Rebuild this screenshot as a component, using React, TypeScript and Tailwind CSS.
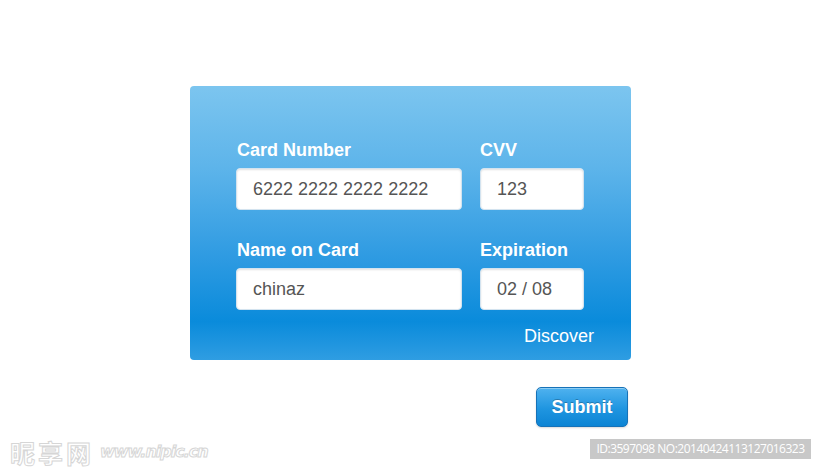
export default function App() {
  const rows = [
    { label: "Card Number", value: "6222 2222 2222 2222", sideLabel: "CVV", sideValue: "123" },
    { label: "Name on Card", value: "chinaz", sideLabel: "Expiration", sideValue: "02 / 08" },
  ];

  return (
    <div className="relative w-[821px] h-[469px] bg-white overflow-hidden font-['Liberation_Sans',Arial,sans-serif]">
      <div className="pt-[86px] pl-[190px] w-[631px] flex flex-col">
        {/* Card form */}
        <div className="w-[441px] h-[274px] rounded-[4px] bg-[linear-gradient(to_bottom,#7cc5ef_0%,#5db4ea_30%,#2f9be2_62%,#0a8bdb_86%,#2f9de2_100%)] pt-[54px] px-[46px] pb-[15px] flex flex-col">
          {rows.map((row, i) => (
            <div key={i} className={`flex gap-[18px] ${i > 0 ? "mt-[30px]" : ""}`}>
              <div className="w-[226px] flex flex-col">
                <label className="text-[18px] leading-[20px] font-bold text-white pl-px">{row.label}</label>
                <div className="mt-[8px] h-[42px] rounded-[4px] bg-white border border-[#d3e3ef] shadow-[inset_0_1px_2px_rgba(0,0,0,0.12)] flex items-center pl-[16px] text-[18px] text-[#555]">
                  {row.value}
                </div>
              </div>
              <div className="w-[104px] flex flex-col">
                <label className="text-[18px] leading-[20px] font-bold text-white">{row.sideLabel}</label>
                <div className="mt-[8px] h-[42px] rounded-[4px] bg-white border border-[#d3e3ef] shadow-[inset_0_1px_2px_rgba(0,0,0,0.12)] flex items-center pl-[16px] text-[18px] text-[#555]">
                  {row.sideValue}
                </div>
              </div>
            </div>
          ))}
          <div className="mt-[16px] flex justify-end">
            <span className="text-[18px] leading-[20px] text-white mr-[-9px]">Discover</span>
          </div>
        </div>

        <div className="mt-[27px] w-[438px] flex justify-end">
          <button className="w-[92px] h-[40px] rounded-[5px] border border-[#1672b8] bg-[linear-gradient(to_bottom,#4fb2ef_0%,#1f95e0_55%,#0c84d4_100%)] shadow-[inset_0_1px_0_rgba(255,255,255,0.35),0_1px_2px_rgba(0,0,0,0.15)] text-white text-[18px] font-bold [text-shadow:0_-1px_0_rgba(0,0,0,0.25)]">
            Submit
          </button>
        </div>
      </div>

      {/* Watermarks */}
      <div className="absolute left-[10px] top-[439px] flex items-center gap-[6px] text-transparent [-webkit-text-stroke:1px_#d6d6d6]">
        <span className="text-[25px] leading-[26px] font-bold tracking-[3px] font-['Noto_Sans_CJK_SC',sans-serif]">昵享网</span>
        <span className="text-[16px] leading-[22px] font-bold italic font-['DejaVu_Sans',sans-serif] tracking-[-1px]">www.nipic.cn</span>
      </div>
      <div className="absolute left-[590px] top-[439px] w-[221px] h-[20px] bg-[#c8c8c8] flex items-center justify-center text-white text-[12px] tracking-[-0.5px] font-['Open_Sans',sans-serif]">
        ID:3597098 NO:20140424113127016323
      </div>
    </div>
  );
}
